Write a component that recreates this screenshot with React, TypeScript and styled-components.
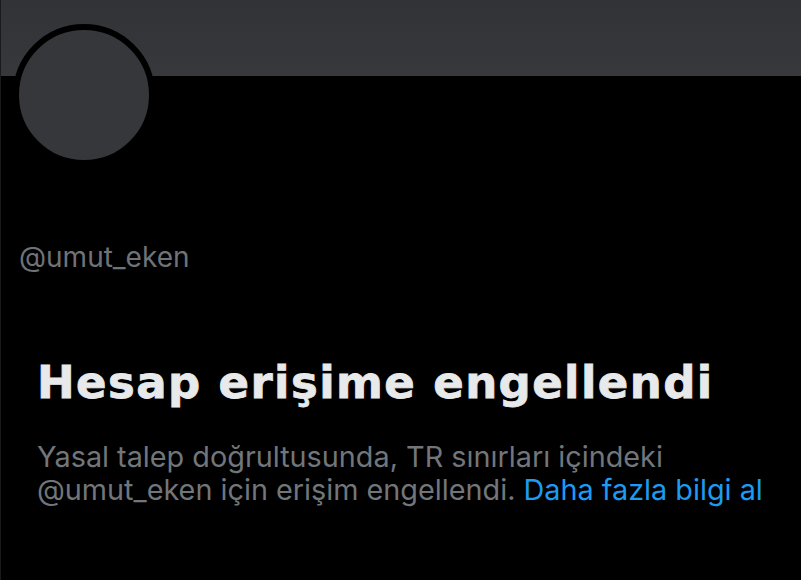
import React from "react";
import styled, { createGlobalStyle } from "styled-components";

const Global = createGlobalStyle`
  html, body { margin: 0; padding: 0; background: #000; }
  body { width: 801px; height: 580px; overflow: hidden; font-family: Inter, "Liberation Sans", sans-serif; }
`;

const Page = styled.div`
  width: 801px;
  height: 580px;
  background: #000;
  display: flex;
  flex-direction: column;
  border-left: 1px solid #1a1a1c;
  box-sizing: border-box;
`;

const Banner = styled.div`
  height: 76px;
  flex-shrink: 0;
  background: linear-gradient(#323337, #37383c);
`;

const Avatar = styled.div`
  width: 130px;
  height: 130px;
  border-radius: 50%;
  border: 6px solid #000;
  background: #36373b;
  margin: -52px 0 0 12px;
  flex-shrink: 0;
`;

const Handle = styled.div`
  margin: 75px 0 0 18px;
  font-size: 28px;
  line-height: 32px;
  color: #6f7378;
`;

const Notice = styled.div`
  padding: 0 0 0 36px;
  margin-top: 82px;
  display: flex;
  flex-direction: column;
`;

const Title = styled.h1`
  margin: 0;
  font-family: "DejaVu Sans", Inter, sans-serif;
  font-size: 45px;
  font-weight: 700;
  letter-spacing: 1.4px;
  -webkit-text-stroke: 0.8px #e7e9ea;
  line-height: 56px;
  color: #e7e9ea;
`;

const Body = styled.p`
  margin: 29px 0 0;
  font-size: 28.8px;
  line-height: 33px;
  color: #71767b;
  width: 740px;
`;

const Link = styled.a`
  color: #1d9bf0;
  text-decoration: none;
`;

export default function App() {
  return (
    <Page>
      <Global />
      <Banner />
      <Avatar />
      <Handle>@umut_eken</Handle>
      <Notice>
        <Title>Hesap erişime engellendi</Title>
        <Body>
          Yasal talep doğrultusunda, TR sınırları içindeki @umut_eken için erişim engellendi.{" "}
          <Link href="#">Daha fazla bilgi al</Link>
        </Body>
      </Notice>
    </Page>
  );
}
